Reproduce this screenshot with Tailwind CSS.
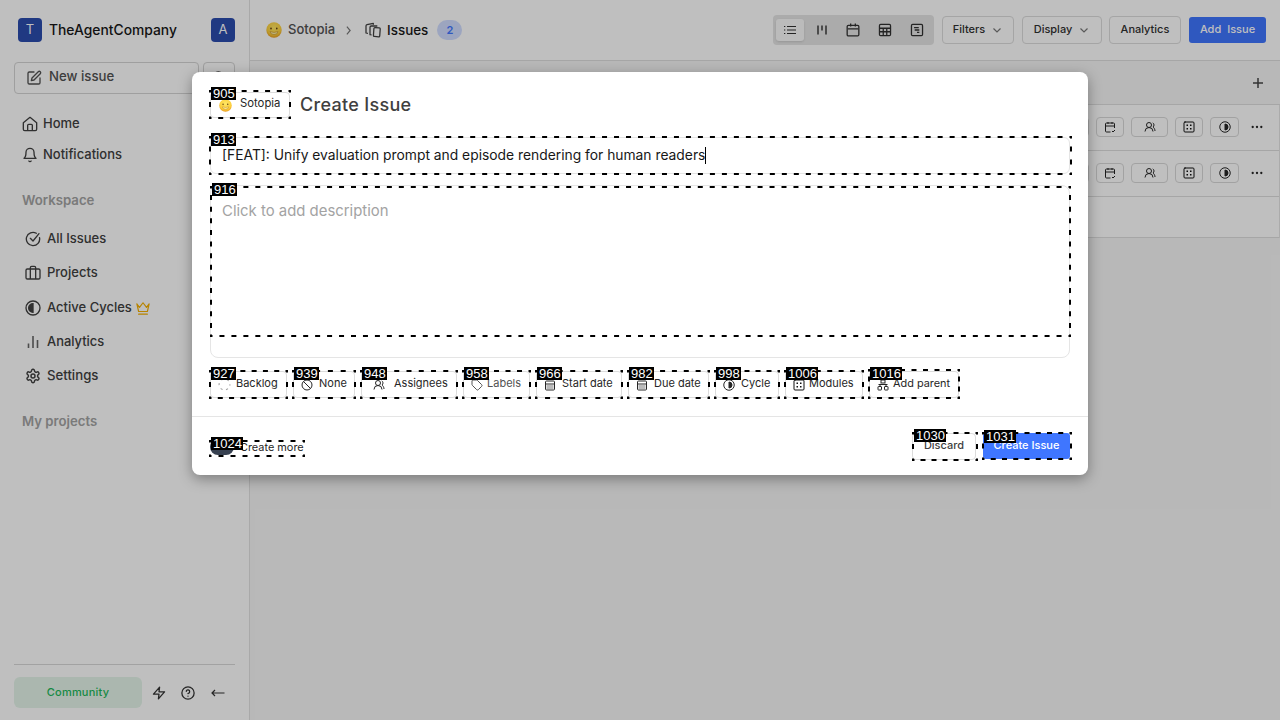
<!DOCTYPE html>
<html lang="en">
<head>
<meta charset="utf-8">
<title>Sotopia - Issues</title>
<script src="https://cdn.jsdelivr.net/npm/@tailwindcss/browser@4"></script>
</head>
<body class="font-['Inter',sans-serif] antialiased text-[#262626]">
<svg class="absolute size-0">
  <defs>
    <radialGradient id="fg" cx=".5" cy=".35" r=".65"><stop offset="0" stop-color="#ffe766"/><stop offset=".7" stop-color="#fdd03c"/><stop offset="1" stop-color="#e89b20"/></radialGradient>
    <symbol id="face" viewBox="0 0 16 16"><circle cx="8" cy="8" r="7.700" fill="url(#fg)"/><ellipse cx="5" cy="6.600" rx=".8" ry="1" fill="#5b3a10"/><ellipse cx="10.800" cy="6.600" rx=".8" ry="1" fill="#5b3a10"/><path d="M4 9.600q4 1.600 8 0-.5 3-4 3t-4-3z" fill="#fff0a0" stroke="#b57a1c" stroke-width=".5"/></symbol>
    <symbol id="cal" viewBox="0 0 24 24"><rect x="2" y="4" width="20" height="18" rx="2"/><path d="M8 1v5M16 1v5M3 10h18"/></symbol>
    <symbol id="calcheck" viewBox="0 0 24 24"><path d="M21 14V6a2 2 0 0 0-2-2H5a2 2 0 0 0-2 2v14a2 2 0 0 0 2 2h8M8 2v4M16 2v4M3 10h18M16 20l2 2 4-4"/></symbol>
    <symbol id="users" viewBox="0 0 24 24"><path d="M18 21a8 8 0 0 0-16 0"/><circle cx="10" cy="8" r="5"/><path d="M22 20c0-3.370-2-6.500-4-8a5 5 0 0 0-.450-8.300"/></symbol>
    <symbol id="dice" viewBox="0 0 24 24"><rect x="2" y="2" width="20" height="20" rx="2"/><path stroke-width="3" d="M8.500 8.500h.01M15.500 8.500h.01M8.500 15.500h.01M15.500 15.500h.01"/></symbol>
    <symbol id="half" viewBox="0 0 24 24"><circle cx="12" cy="12" r="10.500"/><path d="M12 18a6 6 0 0 0 0-12v12z" fill="currentColor"/></symbol>
    <symbol id="down" viewBox="0 0 24 24"><path d="m5 9 7 7 7-7"/></symbol>
    <symbol id="dots" viewBox="0 0 12 12"><circle cx="1.700" cy="6" r="1.150"/><circle cx="6" cy="6" r="1.150"/><circle cx="10.300" cy="6" r="1.150"/></symbol>
  </defs>
</svg>
<div class="relative w-[1280px] h-[720px] overflow-hidden flex bg-white">

  <aside class="w-[250px] h-full shrink-0 border-r border-[#e2e2e2] bg-white px-[14px] flex flex-col text-[13px] font-medium text-[#404040]">
    <div class="mt-[18px] h-6 pl-1 flex items-center">
      <div class="size-6 rounded bg-[#2b4cae] text-white text-[13px] font-normal flex items-center justify-center">T</div>
      <div class="ml-[7px] text-[13.850px] text-[#171717]">TheAgentCompany</div>
      <div class="ml-auto size-6 rounded bg-[#2b4cae] text-white text-[13px] font-normal flex items-center justify-center">A</div>
    </div>
    <div class="mt-5 h-8 flex gap-1">
      <div class="w-[185px] border border-[#d4d4d4] rounded flex items-center pl-[11px] pb-[2px] text-[#525252]">
        <svg class="size-4 mt-[2px]" viewBox="0 0 24 24" fill="none" stroke="currentColor" stroke-width="2" stroke-linecap="round" stroke-linejoin="round"><path d="M12 3H5a2 2 0 0 0-2 2v14a2 2 0 0 0 2 2h14a2 2 0 0 0 2-2v-7"/><path d="M18.400 2.600a2 2 0 0 1 3 3L12 15l-4 1 1-4z"/></svg>
        <span class="ml-[7px] text-[13.200px]">New issue</span>
      </div>
      <div class="w-8 border border-[#d4d4d4] rounded flex items-center justify-center"><svg class="size-4" viewBox="0 0 24 24" fill="none" stroke="currentColor" stroke-width="2"><circle cx="11" cy="11" r="8"/><path d="m21 21-4.300-4.300"/></svg></div>
    </div>
    <div class="mt-[14px] h-[31px] flex items-center pl-2 gap-[5px]">
      <svg class="size-4" viewBox="0 0 24 24" fill="none" stroke="currentColor" stroke-width="2" stroke-linejoin="round"><path d="M2 10 12 2l10 8v10a2 2 0 0 1-2 2H4a2 2 0 0 1-2-2z"/><path d="M8.500 22v-8a1.500 1.500 0 0 1 1.500-1.500h4a1.500 1.500 0 0 1 1.500 1.500v8"/></svg>
      Home
    </div>
    <div class="h-[31px] flex items-center pl-2 gap-[5px]">
      <svg class="size-4" viewBox="0 0 24 24" fill="none" stroke="currentColor" stroke-width="2" stroke-linecap="round" stroke-linejoin="round"><path d="M6 8a6 6 0 0 1 12 0c0 7 3 9 3 9H3s3-2 3-9M10.300 21a1.940 1.940 0 0 0 3.400 0"/></svg>
      Notifications
    </div>
    <div class="mt-5 h-5 pl-2 text-[13.200px] font-semibold text-[#a3a3a3] leading-5">Workspace</div>
    <nav class="mt-3 flex flex-col">
      <div class="h-[34px] flex items-center pl-[11px] gap-[6px]">
        <svg class="size-4" viewBox="0 0 24 24" fill="none" stroke="currentColor" stroke-width="2" stroke-linecap="round" stroke-linejoin="round"><path d="M21.800 10A10 10 0 1 1 17 3.340"/><path d="m8 11 4 4L21 4"/></svg>
        All Issues
      </div>
      <div class="h-[34px] flex items-center pl-[11px] gap-[6px]">
        <svg class="size-4" viewBox="0 0 24 24" fill="none" stroke="currentColor" stroke-width="2" stroke-linejoin="round"><rect x="1.500" y="6" width="21" height="15" rx="2"/><path d="M16 21V4a2 2 0 0 0-2-2h-4a2 2 0 0 0-2 2v17"/></svg>
        Projects
      </div>
      <div class="h-[35px] flex items-center pl-[11px] gap-[6px]">
        <svg class="size-4" viewBox="0 0 24 24" fill="none" stroke="currentColor" stroke-width="2"><circle cx="12" cy="12" r="10.500"/><path d="M12 5.500a6.500 6.500 0 0 0 0 13z" fill="currentColor"/></svg>
        Active Cycles
        <svg class="size-[14px] -ml-[2px] text-[#f4b000]" viewBox="0 0 24 24" fill="none" stroke="currentColor" stroke-width="2" stroke-linecap="round" stroke-linejoin="round"><path d="M1.500 5 6 11l6-8 6 8 4.500-6-3 13h-15zM4.500 22.500h15"/></svg>
      </div>
      <div class="h-[34px] flex items-center pl-[11px] gap-[6px]">
        <svg class="size-4 text-[#666]" viewBox="0 0 16 16" fill="none" stroke="currentColor" stroke-width="1.600"><path d="M3.500 14v-4.500M8 14V2M12.500 14V6"/></svg>
        <span class="text-[12.900px]">Analytics</span>
      </div>
      <div class="h-[34px] flex items-center pl-[11px] gap-[6px]">
        <svg class="size-4" viewBox="0 0 24 24" fill="none" stroke="currentColor" stroke-width="2.200" stroke-linejoin="round"><path d="M12.220 2h-.440a2 2 0 0 0-2 2v.180a2 2 0 0 1-1 1.730l-.430.250a2 2 0 0 1-2 0l-.150-.080a2 2 0 0 0-2.730.730l-.220.380a2 2 0 0 0 .730 2.730l.150.100a2 2 0 0 1 1 1.720v.510a2 2 0 0 1-1 1.740l-.150.090a2 2 0 0 0-.730 2.730l.220.380a2 2 0 0 0 2.730.730l.150-.080a2 2 0 0 1 2 0l.430.250a2 2 0 0 1 1 1.730V20a2 2 0 0 0 2 2h.440a2 2 0 0 0 2-2v-.180a2 2 0 0 1 1-1.730l.430-.250a2 2 0 0 1 2 0l.150.080a2 2 0 0 0 2.730-.730l.220-.390a2 2 0 0 0-.730-2.730l-.150-.080a2 2 0 0 1-1-1.740v-.500a2 2 0 0 1 1-1.740l.150-.090a2 2 0 0 0 .730-2.730l-.220-.380a2 2 0 0 0-2.730-.730l-.150.080a2 2 0 0 1-2 0l-.430-.250a2 2 0 0 1-1-1.730V4a2 2 0 0 0-2-2z"/><circle cx="12" cy="12" r="3"/></svg>
        <span class="text-[13.200px]">Settings</span>
      </div>
    </nav>
    <div class="mt-[18px] h-5 pl-2 text-[13.200px] font-semibold text-[#a3a3a3] leading-5">My projects</div>
    <div class="mt-auto border-t border-[#d8d8d8] h-14 pt-3 flex items-start">
      <div class="w-32 h-[31px] rounded-md bg-[#e4f5ea] text-[#1fb85a] text-[11px] tracking-[0.2px] flex items-center justify-center">Community</div>
      <div class="h-[31px] flex items-center text-[#333]">
        <svg class="ml-[10px] size-[14px]" viewBox="0 0 24 24" fill="none" stroke="currentColor" stroke-width="2.200" stroke-linejoin="round"><path d="M13 2 2.500 14H12l-1 8L21.500 10H12z"/></svg>
        <svg class="ml-[15px] size-[14px]" viewBox="0 0 24 24" fill="none" stroke="currentColor" stroke-width="2.200" stroke-linecap="round"><circle cx="12" cy="12" r="10.500"/><path d="M9 9a3 3 0 0 1 5.900 1c0 2-3 3-3 3M12 17.500h.01"/></svg>
        <svg class="ml-4 size-[14px]" viewBox="0 0 14 14" fill="none" stroke="currentColor" stroke-width="1.200"><path d="M4 4 1 7l3 3M1 7h12.500"/></svg>
      </div>
    </div>
  </aside>

  <main class="flex-1 min-w-0 h-full bg-[#f6f6f6] flex flex-col">
    <header class="h-[61px] shrink-0 border-b border-[#dedede] bg-white flex items-center pr-[14px] pl-4 text-[13px] font-medium">
      <svg class="size-4"><use href="#face"/></svg>
      <span class="ml-[6px] text-[#525252]">Sotopia</span>
      <svg class="ml-[7px] size-[13px] text-[#777]" viewBox="0 0 24 24" fill="none" stroke="currentColor" stroke-width="2.200"><path d="m9 5 6 7-6 7"/></svg>
      <svg class="ml-[10px] size-4 text-[#404040]" viewBox="0 0 24 24" fill="none" stroke="currentColor" stroke-width="1.900" stroke-linejoin="round"><rect x="13" y="8.500" width="9.500" height="13.500" rx="1.500" transform="rotate(4 18 15)"/><path d="M10 19.500 7.500 19V8a2 2 0 0 1 2-2h9M4.500 17 1.500 16.500V6a2 2 0 0 1 1.500-2L12.500 2v2"/></svg>
      <span class="ml-[6px] text-[13.400px] text-[#171717]">Issues</span>
      <span class="ml-[9px] w-[25px] h-5 rounded-full bg-[#d0dcff] text-[#3f76ff] text-[11px] font-semibold flex items-center justify-center">2</span>
      <div class="ml-auto flex items-center gap-2 text-[11px] text-[#303030]">
        <div class="w-[161px] h-[30px] rounded bg-[#e5e5e5] flex items-center p-[3px] gap-1">
          <div class="w-7 h-[22px] rounded-[3px] bg-[#fafafa] shadow flex items-center justify-center"><svg class="size-[14px]" viewBox="0 0 14 14" stroke="currentColor" stroke-width="1.200"><path d="M1 3.500h1.300M1 7h1.300M1 10.500h1.300M4 3.500h9M4 7h9M4 10.500h9"/></svg></div>
          <div class="w-7 flex justify-center"><svg class="size-[14px]" viewBox="0 0 14 14" stroke="currentColor" stroke-width="1.400"><path d="M3 2.500v9M7 2.500v5M11 2.500v9"/></svg></div>
          <div class="w-7 flex justify-center"><svg class="size-[14px]" fill="none" stroke="currentColor" stroke-width="2.200"><use href="#cal"/></svg></div>
          <div class="w-7 flex justify-center"><svg class="size-[14px]" viewBox="0 0 24 24" fill="none" stroke="currentColor" stroke-width="2.200"><rect x="2.500" y="2.500" width="19" height="19" rx="2"/><path d="M2.500 9h19M2.500 15h19M9 9v12.500M15 9v12.500"/></svg></div>
          <div class="w-7 flex justify-center"><svg class="size-[14px]" viewBox="0 0 24 24" fill="none" stroke="currentColor" stroke-width="2.200"><rect x="2.500" y="2.500" width="19" height="19" rx="2"/><path d="M7 8h8M8 12h8M12 16h4"/></svg></div>
        </div>
        <div class="w-[72px] h-7 border border-[#dcdcdc] rounded flex items-center justify-center gap-[6px]"><span class="pb-px">Filters</span><svg class="size-3 text-[#777]" fill="none" stroke="currentColor" stroke-width="2.400"><use href="#down"/></svg></div>
        <div class="w-20 h-7 border border-[#dcdcdc] rounded flex items-center justify-center gap-[6px]"><span class="pb-px">Display</span><svg class="size-3 text-[#777]" fill="none" stroke="currentColor" stroke-width="2.400"><use href="#down"/></svg></div>
        <div class="-ml-px w-[72px] h-7 border border-[#dcdcdc] rounded flex items-center justify-center pb-px">Analytics</div>
        <div class="w-[77px] h-[26px] rounded-[3px] bg-[#3f76ff] text-white flex items-center justify-center gap-[6px] pb-px"><span>Add</span><span>Issue</span></div>
      </div>
    </header>
    <div class="h-11 border-b border-[#dedede] flex items-center justify-end pr-4"><svg class="size-3" viewBox="0 0 12 12" stroke="#444" stroke-width="1.500"><path d="M6 1v10M1 6h10"/></svg></div>
    <div class="bg-white border-r border-[#e4e4e4]">
      <div class="h-[46px] pb-px border-b border-[#dedede] flex items-center justify-end pr-4 gap-[7px]">
        <div class="w-7 h-5 border border-[#d8d8d8] rounded"></div>
        <div class="w-7 h-5 border border-[#d8d8d8] rounded flex items-center justify-center"><svg class="size-3" fill="none" stroke="currentColor" stroke-width="2"><use href="#calcheck"/></svg></div>
        <div class="w-[37px] h-5 border border-[#d8d8d8] rounded flex items-center justify-center"><svg class="size-3" fill="none" stroke="currentColor" stroke-width="2"><use href="#users"/></svg></div>
        <div class="w-7 h-5 border border-[#d8d8d8] rounded flex items-center justify-center"><svg class="size-3" fill="none" stroke="#111" stroke-width="2" stroke-linecap="square"><use href="#dice"/></svg></div>
        <div class="w-[29px] h-5 border border-[#d8d8d8] rounded flex items-center justify-center"><svg class="size-3" fill="none" stroke="currentColor" stroke-width="2"><use href="#half"/></svg></div>
        <svg class="ml-[5px] size-3" fill="currentColor"><use href="#dots"/></svg>
      </div>
      <div class="h-[46px] pb-px border-b border-[#dedede] flex items-center justify-end pr-4 gap-[7px]">
        <div class="w-7 h-5 border border-[#d8d8d8] rounded"></div>
        <div class="w-7 h-5 border border-[#d8d8d8] rounded flex items-center justify-center"><svg class="size-3" fill="none" stroke="currentColor" stroke-width="2"><use href="#calcheck"/></svg></div>
        <div class="w-[37px] h-5 border border-[#d8d8d8] rounded flex items-center justify-center"><svg class="size-3" fill="none" stroke="currentColor" stroke-width="2"><use href="#users"/></svg></div>
        <div class="w-7 h-5 border border-[#d8d8d8] rounded flex items-center justify-center"><svg class="size-3" fill="none" stroke="#111" stroke-width="2" stroke-linecap="square"><use href="#dice"/></svg></div>
        <div class="w-[29px] h-5 border border-[#d8d8d8] rounded flex items-center justify-center"><svg class="size-3" fill="none" stroke="currentColor" stroke-width="2"><use href="#half"/></svg></div>
        <svg class="ml-[5px] size-3" fill="currentColor"><use href="#dots"/></svg>
      </div>
      <div class="h-[41px] border-b border-[#dedede]"></div>
    </div>
  </main>

  <div class="absolute inset-0 bg-black/25"></div>

  <section class="absolute left-[192px] top-[72px] w-[896px] h-[403px] rounded-lg bg-white shadow-[0_4px_14px_rgba(0,0,0,0.35)] flex flex-col">
    <div class="flex-1 px-[18px] pt-[19px]">
      <div class="h-7 flex items-center gap-[10px]">
        <div class="w-20 h-[26px] border border-[#dcdcdc] rounded flex items-center pl-2 text-[11.300px]"><svg class="size-[13px]"><use href="#face"/></svg><span class="ml-2 pb-[3px]">Sotopia</span></div>
        <h1 class="pb-[2px] text-[18px] font-medium tracking-[0.300px] text-[#404040]">Create Issue</h1>
      </div>
      <div class="mt-[18px] h-[37px] border border-[#e5e5e5] rounded-md flex items-center pl-[11px] text-[13.840px] text-[#171717]">[FEAT]: Unify evaluation prompt and episode rendering for human readers<span class="w-px h-[17px] bg-black"></span></div>
      <div class="mt-[11px] h-[173px] border border-[#e5e5e5] rounded-lg pl-[11px] pt-[13px] text-[14.900px] leading-6 text-[#a3a3a3]">Click to add description</div>
      <div class="mt-[13px] flex gap-[6px] text-[11px] leading-[13px]">
        <div class="w-[77px] h-[27px] border border-[#dcdcdc] rounded flex items-center pl-[7px] gap-[5px]"><svg class="size-[13px]" viewBox="0 0 24 24" fill="none" stroke="#a3a3a3" stroke-width="2" stroke-dasharray="4 6.470 " stroke-dashoffset="2"><circle cx="12" cy="12" r="10"/></svg><span class="pb-[2px]">Backlog</span></div>
        <div class="w-[62px] h-[27px] border border-[#dcdcdc] rounded flex items-center pl-[7px] gap-[6px]"><svg class="size-3" viewBox="0 0 24 24" fill="none" stroke="currentColor" stroke-width="2"><circle cx="12" cy="12" r="10"/><path d="m5 5 14 14"/></svg><span class="pb-[2px]">None</span></div>
        <div class="w-24 h-[27px] border border-[#dcdcdc] rounded flex items-center pl-[11px] gap-[9px]"><svg class="size-3" fill="none" stroke="currentColor" stroke-width="2"><use href="#users"/></svg><span class="pb-[2px]">Assignees</span></div>
        <div class="w-[67px] h-[27px] border border-[#dcdcdc] rounded flex items-center pl-[7px] gap-1 text-[#525252]"><svg class="size-3" viewBox="0 0 24 24" fill="none" stroke="currentColor" stroke-width="2" stroke-linejoin="round"><path d="M12.600 2.600A2 2 0 0 0 11.200 2H4a2 2 0 0 0-2 2v7.200a2 2 0 0 0 .600 1.400l8.700 8.700a2.400 2.400 0 0 0 3.400 0l6.600-6.600a2.400 2.400 0 0 0 0-3.400z"/></svg><span class="pb-[2px]">Labels</span></div>
        <div class="w-[86px] h-[27px] border border-[#dcdcdc] rounded flex items-center pl-[7px] gap-[6px]"><svg class="size-3" viewBox="0 0 24 24" fill="none" stroke="currentColor" stroke-width="2"><rect x="3" y="4" width="18" height="18" rx="2"/><path d="M3 10h18"/><rect x="5" y="12" width="14" height="8" fill="#bbb" stroke="none"/></svg><span class="pb-[2px]">Start date</span></div>
        <div class="w-[81px] h-[27px] border border-[#dcdcdc] rounded flex items-center pl-[7px] gap-[6px]"><svg class="size-3" viewBox="0 0 24 24" fill="none" stroke="currentColor" stroke-width="2"><rect x="3" y="4" width="18" height="18" rx="2"/><path d="M3 10h18"/><rect x="5" y="12" width="14" height="8" fill="#bbb" stroke="none"/></svg><span class="pb-[2px]">Due date</span></div>
        <div class="w-16 h-[27px] border border-[#dcdcdc] rounded flex items-center pl-[7px] gap-[6px]"><svg class="size-3" fill="none" stroke="currentColor" stroke-width="2"><use href="#half"/></svg><span class="pb-[2px]">Cycle</span></div>
        <div class="w-[78px] h-[27px] border border-[#dcdcdc] rounded flex items-center pl-[7px] gap-1"><svg class="size-3" fill="none" stroke="#111" stroke-width="2" stroke-linecap="square"><use href="#dice"/></svg><span class="pb-[2px]">Modules</span></div>
        <div class="w-[90px] h-[27px] border border-[#dcdcdc] rounded flex items-center pl-[7px] gap-1"><svg class="size-3" viewBox="0 0 24 24" fill="none" stroke="currentColor" stroke-width="2"><rect x="8" y="2" width="8" height="6"/><path d="M3 11h18M6 11v4M18 11v4"/><rect x="2" y="15" width="7" height="7" rx="1"/><rect x="15" y="15" width="7" height="7" rx="1"/></svg><span class="pb-[2px] text-[10.900px]">Add parent</span></div>
      </div>
    </div>
    <footer class="h-[59px] border-t border-[#e5e5e5] px-[18px] flex items-center justify-between text-[11px]">
      <div class="flex items-center gap-[6px] pt-[3px]"><div class="w-6 h-4 rounded-full bg-[#374151]"></div><span class="text-[10.900px]">Create more</span></div>
      <div class="flex items-center gap-[7px] font-medium">
        <div class="w-16 h-[27px] border border-[#dcdcdc] rounded flex items-center justify-center text-[#404040] pb-px">Discard</div>
        <div class="w-[87px] h-[26px] rounded-[3px] bg-[#3f76ff] text-white flex items-center justify-center pb-px">Create Issue</div>
      </div>
    </footer>
  </section>

  <div id="marks" class="absolute inset-0 pointer-events-none"></div>
</div>
<script>
// id, left, top, width, height, label top
const marks = [
  [905,209,90,82,29,87],[913,209,136,863,39,133],[916,210,186,861,151,183],
  [927,209,370,79,29,367],[939,292,370,64,29,367],[948,360,370,98,29,367],
  [958,462,370,69,29,367],[966,535,370,88,29,367],[982,627,370,83,29,367],
  [998,714,370,66,29,367],[1006,784,370,80,29,367],[1016,868,369,92,30,367],
  [1024,209,440,96,17,437],[1030,912,432,66,29,429],[1031,982,432,90,28,430]
];
// Each side starts and ends on a short dash; the gap is stretched so the pattern fits.
const side = (x1, y1, x2, y2) => {
  const len = Math.abs(x2 - x1) + Math.abs(y2 - y1);
  const n = Math.max(1, Math.round(len / 12));
  const pitch = len / n;
  return `<path d="M${x1} ${y1}L${x2} ${y2}" stroke-dasharray="5 ${pitch - 5}" stroke-dashoffset="2.5"/>`;
};
document.getElementById('marks').innerHTML = marks.map(([id,x,y,w,h,t]) =>
  `<svg class="absolute" style="left:${x}px;top:${y}px" width="${w}" height="${h}" stroke="#000" stroke-width="2">${side(0,1,w,1)}${side(0,h-1,w,h-1)}${side(1,0,1,h)}${side(w-1,0,w-1,h)}</svg>
   <div class="absolute bg-black text-white pl-[2px] pr-px h-[13px] font-['Liberation_Sans',sans-serif] text-[13px] leading-[13px]" style="left:${x+2}px;top:${t}px">${id}</div>`).join('');
</script>
</body>
</html>
